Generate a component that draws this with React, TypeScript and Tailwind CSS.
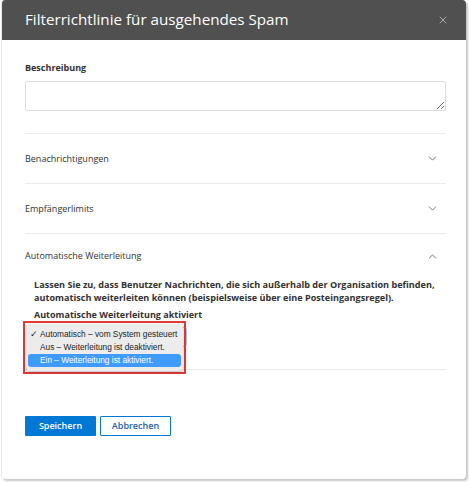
import { ChevronDown, ChevronUp, X } from "lucide-react";

const font = { fontFamily: '"Open Sans", "Noto Sans", sans-serif' };

function Section({ title }: { title: string }) {
  return (
    <div className="flex h-[50px] items-center justify-between border-b border-[#edebe9]">
      <span className="text-[9px] text-[#323130]">{title}</span>
      <ChevronDown className="mr-[7px] h-[13px] w-[13px] text-[#4a4846]" strokeWidth={1.4} />
    </div>
  );
}

export default function App() {
  return (
    <div className="h-[482px] w-[469px] bg-white" style={font}>
      <div className="ml-[1px] flex h-[479px] w-[465px] flex-col overflow-hidden rounded-[4px] border-l border-[#e8e8e8] bg-white shadow-[2px_2px_2px_rgba(0,0,0,0.22)]">
        <header className="flex h-[40px] shrink-0 items-center justify-between bg-[#505050] pl-[23px] pr-[17px]">
          <h1 className="text-[15.2px] leading-none text-white">
            Filterrichtlinie für ausgehendes Spam
          </h1>
          <X className="h-[12px] w-[12px] text-[#c8c8c8]" strokeWidth={1.5} />
        </header>

        <div className="pl-[23px] pr-[20px] pt-[22px]">
          <label className="block text-[9px] font-bold leading-[12px] text-[#323130]">
            Beschreibung
          </label>
          <textarea className="mt-[7px] block h-[30px] w-full resize-y rounded-[2px] border border-[#dcdcdc] text-[10px]" />

          <div className="mt-[22px] border-t border-[#edebe9]">
            <Section title="Benachrichtigungen" />
            <Section title="Empfängerlimits" />

            <div className="border-b border-[#edebe9] pb-[22px]">
              <div className="flex h-[44px] items-center justify-between">
                <span className="text-[9px] text-[#323130]">Automatische Weiterleitung</span>
                <ChevronUp className="mr-[7px] h-[13px] w-[13px] text-[#4a4846]" strokeWidth={1.4} />
              </div>
              <div className="pl-[9px]">
                <p className="text-[9.1px] font-bold leading-[13px] text-[#323130]">
                  Lassen Sie zu, dass Benutzer Nachrichten, die sich außerhalb der Organisation befinden,
                  automatisch weiterleiten können (beispielsweise über eine Posteingangsregel).
                </p>
                <p className="mt-[5px] text-[9px] font-bold leading-[12px] text-[#323130]">
                  Automatische Weiterleitung aktiviert
                </p>
                <div className="relative mt-[6px] h-[20px] w-[153px] rounded-[3px] border border-[#9fc3ee] bg-white">
                  <div className="absolute left-[-12px] top-[-7px] h-[53px] w-[163px] border-2 border-[#e53935] p-[1px]">
                    <div
                      className="flex h-full w-full flex-col rounded-[4px] bg-[#ececec] px-[2px] py-[4px] text-[8.3px] leading-[13px] whitespace-nowrap text-[#222] shadow-[0_1px_3px_rgba(0,0,0,0.3)]"
                      style={{ fontFamily: '"Liberation Sans", Arial, sans-serif' }}
                    >
                      <div className="flex items-center px-[2px]">
                        <span className="w-[10px] text-[9px]">✓</span>
                        <span>Automatisch – vom System gesteuert</span>
                      </div>
                      <div className="flex items-center px-[2px]">
                        <span className="w-[10px]" />
                        <span>Aus – Weiterleitung ist deaktiviert.</span>
                      </div>
                      <div className="flex items-center rounded-[3px] bg-[#3f9bfb] px-[2px] text-white">
                        <span className="w-[10px]" />
                        <span>Ein – Weiterleitung ist aktiviert.</span>
                      </div>
                    </div>
                  </div>
                </div>
              </div>
            </div>
          </div>

          <div className="mt-[46px] flex gap-[4px]">
            <button className="h-[20px] w-[71px] rounded-[1px] bg-[#0078d4] text-[9px] font-semibold text-white">
              Speichern
            </button>
            <button className="h-[20px] w-[71px] rounded-[1px] border border-[#0078d4] bg-white text-[9px] font-semibold text-[#1a5ea8]">
              Abbrechen
            </button>
          </div>
        </div>
      </div>
    </div>
  );
}
